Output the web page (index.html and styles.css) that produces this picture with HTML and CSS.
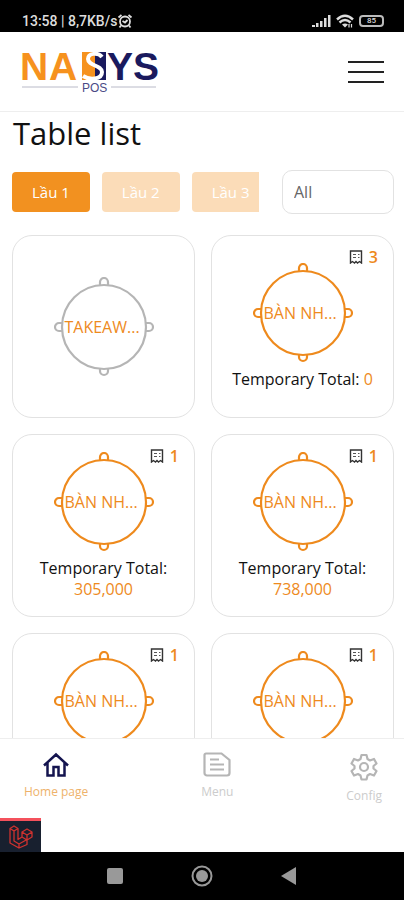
FILE: index.html
```html
<!DOCTYPE html>
<html lang="en">
<head>
  <meta charset="UTF-8" />
  <meta name="viewport" content="width=device-width, initial-scale=1.0"/>
  <title>NASYS POS - Table list</title>
  <link rel="stylesheet" href="styles.css">
</head>
<body>

  <!-- Icons used more than once -->
  <svg class="sprite" aria-hidden="true">
    <symbol id="table" viewBox="0 0 100 100">
      <g fill="none" stroke="currentColor" stroke-width="2.200">
        <circle cx="50" cy="50" r="42"/>
        <path d="M46 8V5a4 4 0 0 1 8 0v3M46 92v2a4 4 0 0 0 8 0v-2M8 46H5a4 4 0 0 0 0 8h3M92 46h3a4 4 0 0 1 0 8h-3"/>
      </g>
    </symbol>
    <symbol id="receipt" viewBox="0 0 14 14">
      <path d="M1.500 1h11v12l-2-1.500-2 1.500-1.500-1.500L5.500 13l-2-1.500-2 1.500z" fill="none" stroke="#333" stroke-width="1.400"/>
      <path d="M4 4.500h3M4 7.500h3M9 4.500h1.500M9 7.500h1.500" stroke="#555" stroke-width="1.200"/>
    </symbol>
  </svg>

  <!-- Phone status bar -->
  <div class="status">
    <span>13:58 | 8,7KB/s</span>
    <svg class="alarm" width="16" height="16" viewBox="0 0 16 16" fill="none" stroke="#ddd" stroke-width="1.800">
      <circle cx="8" cy="8.500" r="5"/>
      <path d="M1.500 4.500 4.500 2M14.500 4.500 11.500 2M5.500 8l2.500 1.500L10.500 7M4 12.500 2.500 14.500M12 12.500l1.500 2"/>
    </svg>
    <div class="signals">
      <svg width="19" height="14" viewBox="0 0 19 14" fill="#ddd">
        <path d="M0 11h3v2H0zM4 9h2.500v4H4zM8 7h2.500v6H8zM12 4h2.500v9H12zM16 1h2.500v12H16z"/>
      </svg>
      <svg width="18" height="14" viewBox="0 0 18 14" fill="none" stroke="#ddd" stroke-width="2.400">
        <path d="M1 5.500Q9-2 17 5.500M3.500 8.500Q9 3.500 14.500 8.500"/>
        <path d="M9 13.500 6 10.500q3-2 6 0z" fill="#ddd" stroke="none"/>
        <path d="M13 10v3.500M15.500 10v3.500" stroke-width="1.200"/>
      </svg>
      <span class="battery">85</span>
    </div>
  </div>

  <header>
    <a href="#home" class="logo" aria-label="NASYS POS">
      <svg width="140" height="52" viewBox="0 -5 140 52">
        <g class="logo-word">
          <text x="-2" y="29" fill="#f6921e">N</text>
          <text x="27" y="29" fill="#f6921e">A</text>
          <text x="85" y="29" fill="#1a1a5e">Y</text>
          <text x="111" y="29" fill="#1a1a5e">S</text>
        </g>
        <path d="M60 1h13v28H60z" fill="#f6921e"/>
        <path d="M73 1h11v28H73z" fill="#1a1a5e"/>
        <path d="M80 6C76 1 66 2 66 8c0 7 14 6 14 13 0 8-13 8-19 4" fill="none" stroke="#fff" stroke-width="4"/>
        <path d="M0 36h56M89 36h45" stroke="#b9bac8"/>
        <text class="logo-pos" x="60" y="41" fill="#4a4a86">POS</text>
      </svg>
    </a>
    <button class="menu-btn" type="button" aria-label="Open menu">
      <span></span><span></span><span></span>
    </button>
  </header>

  <main>
    <h1>Table list</h1>

    <div class="filters">
      <div class="floors">
        <button type="button" class="floor active">Lầu 1</button>
        <button type="button" class="floor">Lầu 2</button>
        <button type="button" class="floor">Lầu 3</button>
      </div>
      <select aria-label="Status">
        <option>All</option>
      </select>
    </div>

    <!-- Tables -->
    <div class="tables">
      <div class="card">
        <div class="table-pic free">
          <svg><use href="#table"/></svg>
          <span>TAKEAW...</span>
        </div>
      </div>
      <div class="card">
        <div class="bills"><svg><use href="#receipt"/></svg>3</div>
        <div class="table-pic">
          <svg><use href="#table"/></svg>
          <span>BÀN NH...</span>
        </div>
        <p>Temporary Total: <b>0</b></p>
      </div>
      <div class="card">
        <div class="bills"><svg><use href="#receipt"/></svg>1</div>
        <div class="table-pic">
          <svg><use href="#table"/></svg>
          <span>BÀN NH...</span>
        </div>
        <p>Temporary Total: <b>305,000</b></p>
      </div>
      <div class="card">
        <div class="bills"><svg><use href="#receipt"/></svg>1</div>
        <div class="table-pic">
          <svg><use href="#table"/></svg>
          <span>BÀN NH...</span>
        </div>
        <p>Temporary Total: <b>738,000</b></p>
      </div>
      <div class="card cut">
        <div class="bills"><svg><use href="#receipt"/></svg>1</div>
        <div class="table-pic">
          <svg><use href="#table"/></svg>
          <span>BÀN NH...</span>
        </div>
      </div>
      <div class="card cut">
        <div class="bills"><svg><use href="#receipt"/></svg>1</div>
        <div class="table-pic">
          <svg><use href="#table"/></svg>
          <span>BÀN NH...</span>
        </div>
      </div>
    </div>
  </main>

  <footer>
    <nav>
      <a href="#home" class="active">
        <svg width="28" height="28" viewBox="0 0 28 28" fill="none" stroke="#14144f" stroke-width="2.500">
          <path d="M2 14.500 14 3.500l12 11M5.500 12v12.500h6V16h5v8.500h6V12"/>
        </svg>
        Home page
      </a>
      <a href="#menu">
        <svg width="28" height="28" viewBox="0 0 28 28" fill="none" stroke="#b5b5b5" stroke-width="2.200">
          <path d="M3 2.500h15.500l8 6.500v13a2.500 2.500 0 0 1-2.500 2.500H4A2.500 2.500 0 0 1 1.500 22V4A1.500 1.500 0 0 1 3 2.500M7 8.500h9M7 13.500h14M7 18.500h14"/>
        </svg>
        Menu
      </a>
      <a href="#config">
        <svg width="32" height="32" viewBox="-2 -2 32 32" fill="none" stroke="#b5b5b5" stroke-width="2.200" stroke-linejoin="round">
          <path d="M11.500 2h5l1 4 2.500 1.500 4-1.500 2.500 4.500-3 2.500v2.500l3 2.500-2.500 4.500-4-1.500-2.500 1.500-1 4h-5l-1-4L8 21l-4 1.500L1.500 18l3-2.500V13l-3-2.500L4 6l4 1.500L10.500 6z"/>
          <circle cx="14" cy="14" r="4"/>
        </svg>
        Config
      </a>
    </nav>
    <a href="#debug" class="debugbar" aria-label="Debug bar">
      <svg width="24" height="24" viewBox="0 0 24 24" fill="none" stroke="#d0322f" stroke-width="1.300" stroke-linejoin="round">
        <path d="M1 3.500 5 1l4 2.500v11l4-2.500V7l5-3 5 3v5l-5 3v4.500L10 23l-9-5zM1 3.500l4 2.500 4-2.500M5 6v10l5 3 8-4.500M13 7l5 3 5-3M18 10v5M10 19v4M13 12l5 3"/>
      </svg>
    </a>
  </footer>

  <!-- Phone navigation keys -->
  <div class="keys">
    <svg width="16" height="16" viewBox="0 0 16 16"><rect width="16" height="16" rx="2" fill="#999"/></svg>
    <svg width="22" height="22" viewBox="0 0 22 22"><circle cx="11" cy="11" r="9.500" fill="none" stroke="#999" stroke-width="2"/><circle cx="11" cy="11" r="6" fill="#999"/></svg>
    <svg width="16" height="18" viewBox="0 0 16 18"><path d="M15 0v18L0 9z" fill="#999"/></svg>
  </div>

</body>
</html>
```

FILE: styles.css
```css
* { box-sizing: border-box; margin: 0; padding: 0; font-family: "Open Sans", "Noto Sans", sans-serif; }
body { display: flex; flex-direction: column; height: 100vh; overflow: hidden; background: #fff; color: #111; }
button { border: none; cursor: pointer; }
a { text-decoration: none; }
svg { display: block; flex-shrink: 0; }
.sprite { display: none; }

/* Status bar */
.status { display: flex; align-items: center; height: 32px; padding: 10px 20px 0 22px; background: #000; color: #ddd; }
.status span { font-family: Roboto, sans-serif; font-size: 14px; font-weight: 500; }
.signals { display: flex; align-items: center; gap: 5px; margin-left: auto; }
.status .battery { width: 25px; border: 2px solid #bbb; border-radius: 4px; font-size: 8px; line-height: 8px; text-align: center; }

/* Header */
header { display: flex; align-items: center; justify-content: space-between; height: 80px; padding: 0 20px 0 22px; border-bottom: 1px solid #eee; }
.logo svg { overflow: visible; }
.logo-word text { font-family: "Liberation Sans", Arial, sans-serif; font-size: 39px; font-weight: bold; }
.logo-pos { font-family: "Liberation Sans", Arial, sans-serif; font-size: 12px; }
.menu-btn { display: flex; flex-direction: column; gap: 8px; width: 36px; background: none; }
.menu-btn span { height: 2px; background: #222; }

/* Table list */
main { flex: 1; min-height: 0; overflow: hidden; padding: 0 10px 0 12px; }
h1 { font-size: 31px; font-weight: 400; line-height: 42px; padding-left: 1px; }
.filters { display: flex; align-items: center; gap: 23px; margin: 16px 0 21px; }
.floors { display: flex; flex: 1; gap: 12px; min-width: 0; overflow: hidden; }
.floor { flex-shrink: 0; height: 40px; padding: 0 20px; border-radius: 4px; background: #fbdcb8; color: #fff; font-size: 15px; font-weight: 500; }
.floor.active { background: #f29120; }
select { width: 112px; height: 44px; padding: 0 11px; border: 1px solid #e2e2e2; border-radius: 10px; background: #fff; color: #666; font-size: 16px; appearance: none; }

.tables { display: grid; grid-template-columns: 1fr 1fr; gap: 16px; }
.card { position: relative; display: flex; flex-direction: column; align-items: center; justify-content: center; gap: 6px; aspect-ratio: 1; padding: 0 10px; border: 1px solid #e2e2e2; border-radius: 20px; }
.card.cut { justify-content: flex-start; padding-top: 17px; }
.card p { font-size: 16px; font-weight: 500; line-height: 21px; text-align: center; }
.card b { color: #ee8a1d; font-weight: 400; }
.table-pic { position: relative; color: #ee8a1d; }
.table-pic.free { color: #b5b5b5; }
.table-pic svg { width: 100px; height: 100px; }
.table-pic span { position: absolute; top: 38px; left: 11px; color: #ee8a1d; font-size: 16px; font-weight: 500; line-height: 24px; white-space: nowrap; }
.bills { position: absolute; top: 10px; right: 15px; display: flex; align-items: center; gap: 6px; color: #ee8a1d; font-size: 16px; font-weight: 600; line-height: 22px; }
.bills svg { width: 14px; height: 14px; }

/* Bottom menu */
footer { position: relative; height: 114px; border-top: 1px solid #eee; background: #fff; }
nav { display: flex; justify-content: space-between; padding: 12px 22px 0 24px; }
nav a { display: flex; flex-direction: column; align-items: center; gap: 5px; color: #ccc; font-size: 12px; line-height: 16px; }
nav a.active { color: #eeb26a; }
.debugbar { position: absolute; left: 0; bottom: 0; display: flex; align-items: center; justify-content: center; width: 41px; height: 34px; border-top: 3px solid #f4515c; background: #18202f; }

.keys { display: flex; align-items: center; justify-content: center; gap: 68px; height: 48px; background: #000; }
```
